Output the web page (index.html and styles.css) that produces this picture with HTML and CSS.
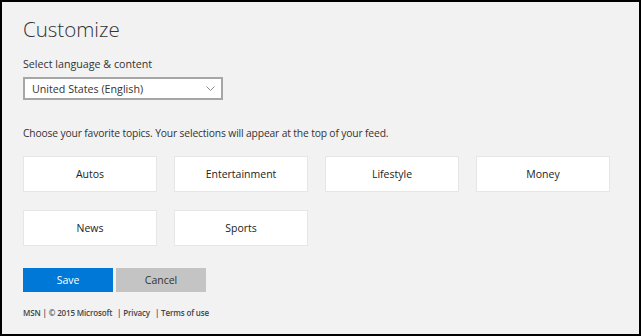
FILE: index.html
```html
<!DOCTYPE html>
<html lang="en">
<head>
  <meta charset="UTF-8">
  <title>Customize</title>
  <link rel="stylesheet" href="styles.css">
</head>
<body>
  <div class="page">
    <h1>Customize</h1>
    <label class="label" for="market">Select language &amp; content</label>
    <div class="select" id="market">
      <span>United States (English)</span>
      <svg class="chevron" width="9" height="5" viewBox="0 0 9 5"><path d="M0.5 0.5 L4.5 4.5 L8.5 0.5" fill="none" stroke="#8a8a8a" stroke-width="1"/></svg>
    </div>

    <p class="intro">Choose your favorite topics. Your selections will appear at the top of your feed.</p>

    <div class="topics">
      <div class="topic">Autos</div>
      <div class="topic">Entertainment</div>
      <div class="topic">Lifestyle</div>
      <div class="topic">Money</div>
      <div class="topic">News</div>
      <div class="topic">Sports</div>
    </div>

    <div class="actions">
      <button class="btn save">Save</button>
      <button class="btn cancel">Cancel</button>
    </div>

    <div class="footer">
      <span>MSN | © 2015 Microsoft</span>
      <span class="sep">| Privacy</span>
      <span class="sep">| Terms of use</span>
    </div>
  </div>
</body>
</html>
```
FILE: styles.css
```css
html, body {
  margin: 0;
  padding: 0;
}

body {
  font-family: 'Open Sans', 'Noto Sans', sans-serif;
  color: #333;
}

.page {
  box-sizing: border-box;
  width: 641px;
  height: 336px;
  border: 2px solid #000;
  background: #f2f2f2;
  padding: 13px 0 0 21px;
}

h1 {
  margin: 0;
  font-size: 20.5px;
  font-weight: 300;
  line-height: 28px;
  color: #333;
}

.label {
  display: block;
  margin-top: 14px;
  font-size: 10.7px;
  line-height: 14px;
}

.select {
  box-sizing: border-box;
  width: 200px;
  height: 23px;
  margin-top: 6px;
  border: 2px solid #a6a6a6;
  background: #fff;
  display: flex;
  align-items: center;
  justify-content: space-between;
  padding: 0 6px 0 7px;
  font-size: 10.7px;
}

.chevron {
  display: block;
}

.intro {
  margin: 26px 0 0;
  font-size: 10.3px;
  letter-spacing: -0.15px;
  line-height: 14px;
}

.topics {
  margin-top: 16px;
  display: grid;
  grid-template-columns: repeat(4, 134px);
  column-gap: 17px;
  row-gap: 18px;
}

.topic {
  box-sizing: border-box;
  height: 36px;
  background: #fff;
  border: 1px solid #e6e6e6;
  display: flex;
  align-items: center;
  justify-content: center;
  font-size: 10.5px;
  color: #222;
}

.actions {
  margin-top: 22px;
  display: flex;
  gap: 3px;
}

.btn {
  width: 90px;
  height: 24px;
  border: none;
  font-family: inherit;
  font-size: 10.5px;
  padding: 0;
}

.save {
  background: #0078d7;
  color: #fff;
}

.cancel {
  background: #c4c4c4;
  color: #333;
}

.footer {
  margin-top: 15px;
  font-size: 8px;
  font-weight: 600;
  letter-spacing: -0.15px;
  line-height: 11px;
  color: #444;
}

.sep {
  margin-left: 3px;
}
```
